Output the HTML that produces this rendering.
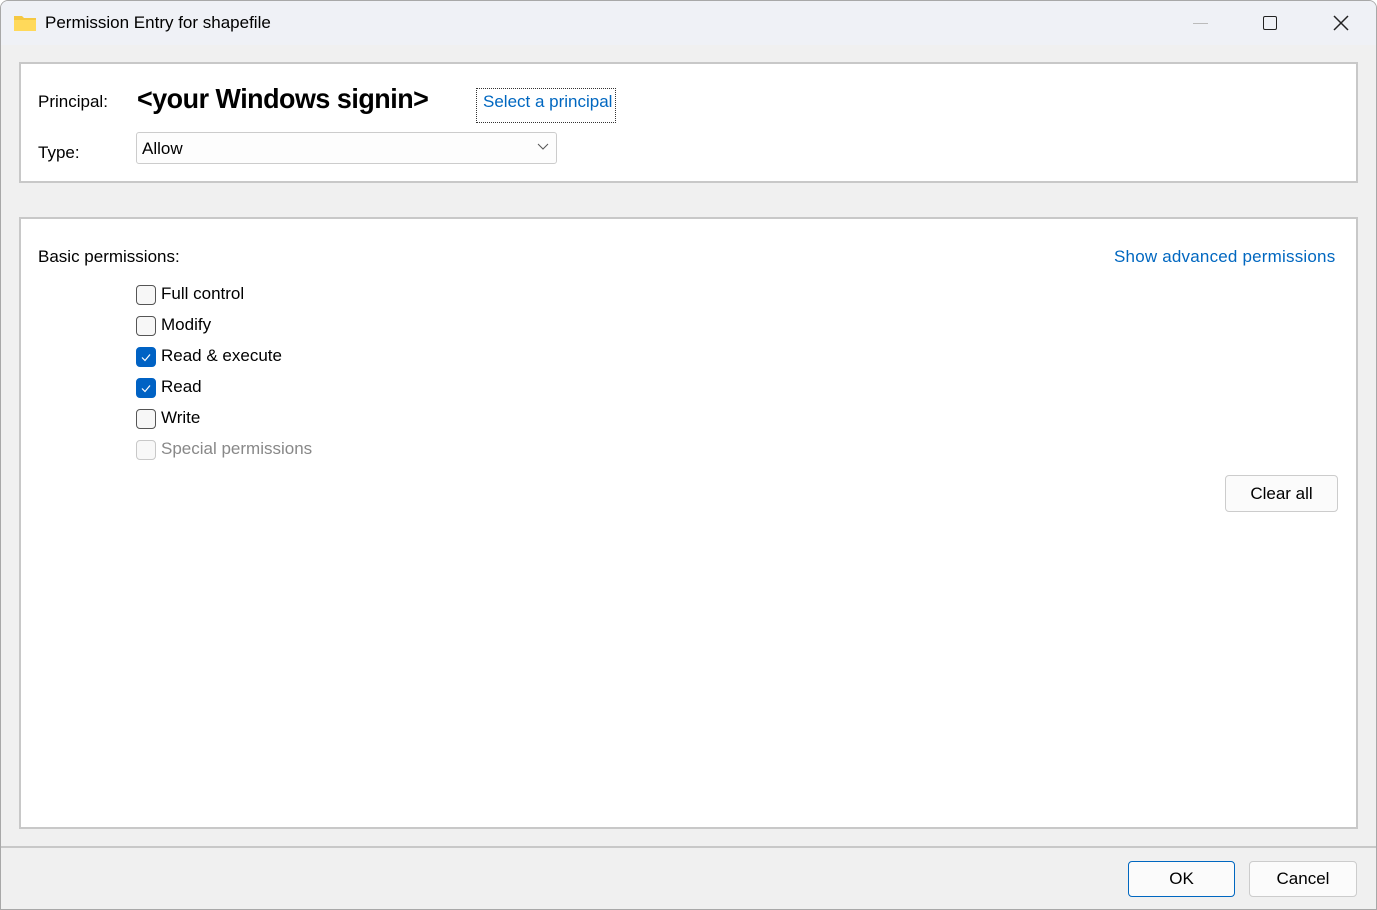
<!DOCTYPE html>
<html><head><style>
*{box-sizing:border-box;margin:0;padding:0}
body{width:1377px;height:910px;overflow:hidden;background:#fff;font-family:"Segoe UI","Liberation Sans",sans-serif;color:#000;position:relative}
.win{position:absolute;left:0;top:0;width:1377px;height:910px;border:1px solid #a8a8a8;border-radius:8px 8px 0 0;background:#f0f0f0;overflow:hidden}
.title{position:absolute;left:0;top:0;width:100%;height:44px;background:#eff1f6}
.t{position:absolute;font-size:17px;white-space:nowrap}
.box{position:absolute;background:#fff;border:2px solid #c8c8c8}
.cb{position:absolute;left:135px;width:20px;height:20px;border:1px solid #555;border-radius:4px;background:#f7f7f7}
.cb.on{background:#0062c4;border-color:#0062c4}
.cb.dis{border-color:#c8c8c8;background:#f8f8f8}
.btn{position:absolute;border:1px solid #ccc;border-radius:4px;background:#fbfbfb;font-size:17px;text-align:center}
</style></head><body>
<div class="win">
<div class="title">
<svg style="position:absolute;left:12px;top:12px" width="24" height="20" viewBox="0 0 24 20"><path d="M1 3h8l2 2h12v13H1z" fill="#f5c842"/><path d="M1 7h22v11H1z" fill="#ffd95a"/></svg>
<div class="t" style="left:44px;top:12px">Permission Entry for shapefile</div>
<div style="position:absolute;left:1192px;top:22px;width:15px;height:1px;background:#bbb"></div>
<div style="position:absolute;left:1262px;top:15px;width:14px;height:14px;border:1.6px solid #222;border-radius:2px"></div>
<svg style="position:absolute;left:1332px;top:14px" width="16" height="16"><path d="M1 1L15 15M15 1L1 15" stroke="#222" stroke-width="1.5"/></svg>
</div>
<div class="box" style="left:18px;top:61px;width:1339px;height:121px"></div>
<div class="t" style="left:37px;top:91px">Principal:</div>
<div class="t" style="left:136px;top:82px;font-family:'Liberation Sans',sans-serif;font-weight:bold;font-size:28px;letter-spacing:-0.5px;transform:scaleX(0.96);transform-origin:left">&lt;your Windows signin&gt;</div>
<div style="position:absolute;left:475px;top:87px;width:140px;height:35px;border:1px dotted #333"></div>
<div class="t" style="left:482px;top:91px;color:#0067c0">Select a principal</div>
<div class="t" style="left:37px;top:142px">Type:</div>
<div style="position:absolute;left:135px;top:131px;width:421px;height:32px;border:1px solid #ccc;border-radius:3px;background:#fdfdfd"></div>
<div class="t" style="left:141px;top:138px">Allow</div>
<svg style="position:absolute;left:536px;top:142px" width="12" height="8"><path d="M1 1l5 5 5-5" stroke="#555" fill="none"/></svg>
<div class="box" style="left:18px;top:216px;width:1339px;height:612px"></div>
<div class="t" style="left:37px;top:246px">Basic permissions:</div>
<div class="t" style="left:1113px;top:246px;color:#0067c0;letter-spacing:0.2px">Show advanced permissions</div>
<div class="cb" style="top:284px"></div><div class="t" style="left:160px;top:283px">Full control</div>
<div class="cb" style="top:315px"></div><div class="t" style="left:160px;top:314px">Modify</div>
<div class="cb on" style="top:346px"><svg width="18" height="18"><path d="M5 9.5l3 3 5-6" stroke="#fff" fill="none" stroke-width="1.2"/></svg></div><div class="t" style="left:160px;top:345px">Read &amp; execute</div>
<div class="cb on" style="top:377px"><svg width="18" height="18"><path d="M5 9.5l3 3 5-6" stroke="#fff" fill="none" stroke-width="1.2"/></svg></div><div class="t" style="left:160px;top:376px">Read</div>
<div class="cb" style="top:408px"></div><div class="t" style="left:160px;top:407px">Write</div>
<div class="cb dis" style="top:439px"></div><div class="t" style="left:160px;top:438px;color:#888">Special permissions</div>
<div class="btn" style="left:1224px;top:474px;width:113px;height:37px;line-height:35px">Clear all</div>
<div style="position:absolute;left:0;top:845px;width:100%;height:2px;background:#c8c8c8"></div>
<div class="btn" style="left:1127px;top:860px;width:107px;height:36px;line-height:34px;border-color:#0067c0">OK</div>
<div class="btn" style="left:1248px;top:860px;width:108px;height:36px;line-height:34px">Cancel</div>
</div>
</body></html>
